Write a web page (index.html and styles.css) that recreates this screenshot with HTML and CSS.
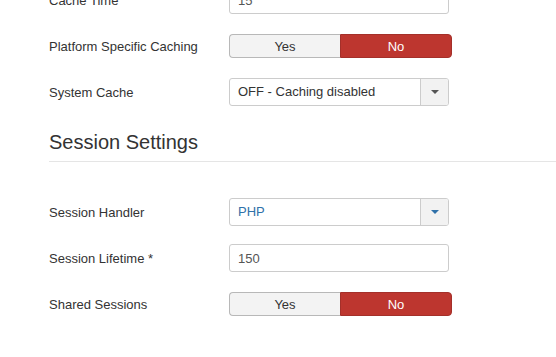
FILE: index.html
```html
<!DOCTYPE html>
<html lang="en">
<head>
    <meta charset="UTF-8">
    <meta name="viewport" content="width=device-width, initial-scale=1.0">
    <title>System Settings</title>
    <link rel="stylesheet" href="styles.css">
</head>
<body>

    <div class="form-container">
        <div class="control-group">
            <label class="control-label">Cache Time</label>
            <div class="controls">
                <input type="text" class="inputbox" value="15">
            </div>
        </div>

        <div class="control-group">
            <label class="control-label">Platform Specific Caching</label>
            <div class="controls">
                <div class="btn-group">
                    <button class="btn">Yes</button>
                    <button class="btn btn-danger">No</button>
                </div>
            </div>
        </div>

        <div class="control-group">
            <label class="control-label">System Cache</label>
            <div class="controls">
                <div class="select">
                    <span class="select-value">OFF - Caching disabled</span>
                    <span class="select-arrow"><b class="caret"></b></span>
                </div>
            </div>
        </div>

        <h3 class="legend">Session Settings</h3>

        <div class="control-group">
            <label class="control-label">Session Handler</label>
            <div class="controls">
                <div class="select select-active">
                    <span class="select-value">PHP</span>
                    <span class="select-arrow"><b class="caret"></b></span>
                </div>
            </div>
        </div>

        <div class="control-group">
            <label class="control-label">Session Lifetime *</label>
            <div class="controls">
                <input type="text" class="inputbox" value="150">
            </div>
        </div>

        <div class="control-group">
            <label class="control-label">Shared Sessions</label>
            <div class="controls">
                <div class="btn-group">
                    <button class="btn">Yes</button>
                    <button class="btn btn-danger">No</button>
                </div>
            </div>
        </div>
    </div>

</body>
</html>
```

FILE: styles.css
```css
* {
    margin: 0;
    padding: 0;
    box-sizing: border-box;
    font-family: 'Liberation Sans', Arial, sans-serif;
}

body {
    background: #fff;
    color: #333;
    font-size: 13px;
    overflow: hidden;
}

.form-container {
    margin-top: -14px;
    padding-left: 49px;
}

.control-group {
    display: flex;
    align-items: center;
    height: 28px;
    margin-bottom: 18px;
}

.control-label {
    width: 180px;
    flex-shrink: 0;
    color: #333;
}

.inputbox {
    width: 220px;
    height: 28px;
    padding: 0 8px;
    border: 1px solid #ccc;
    border-radius: 3px;
    font-size: 13px;
    color: #555;
    background: #fff;
}

.btn-group {
    display: flex;
    width: 223px;
    height: 24px;
}

.btn {
    flex: 1;
    font-size: 13px;
    color: #333;
    background: #f3f3f3;
    border: 1px solid #b8b8b8;
    cursor: pointer;
}

.btn:first-child {
    border-radius: 4px 0 0 4px;
    border-right: none;
}

.btn:last-child {
    border-radius: 0 4px 4px 0;
}

.btn-danger {
    background: #bd362f;
    border-color: #a4302a;
    color: #fff;
}

.select {
    display: flex;
    width: 220px;
    height: 28px;
    border: 1px solid #ccc;
    border-radius: 3px;
    overflow: hidden;
    background: #fff;
}

.select-value {
    flex: 1;
    padding: 0 8px;
    line-height: 26px;
    color: #333;
}

.select-arrow {
    width: 28px;
    display: flex;
    align-items: center;
    justify-content: center;
    background: #f2f2f2;
    border-left: 1px solid #ccc;
}

.caret {
    width: 0;
    height: 0;
    border-left: 4px solid transparent;
    border-right: 4px solid transparent;
    border-top: 4px solid #555;
}

.select-active .select-value {
    color: #3071a9;
}

.select-active .caret {
    border-top-color: #3071a9;
}

.legend {
    font-size: 20px;
    font-weight: normal;
    line-height: 37px;
    color: #333;
    border-bottom: 1px solid #e5e5e5;
    margin-bottom: 36px;
}
```
